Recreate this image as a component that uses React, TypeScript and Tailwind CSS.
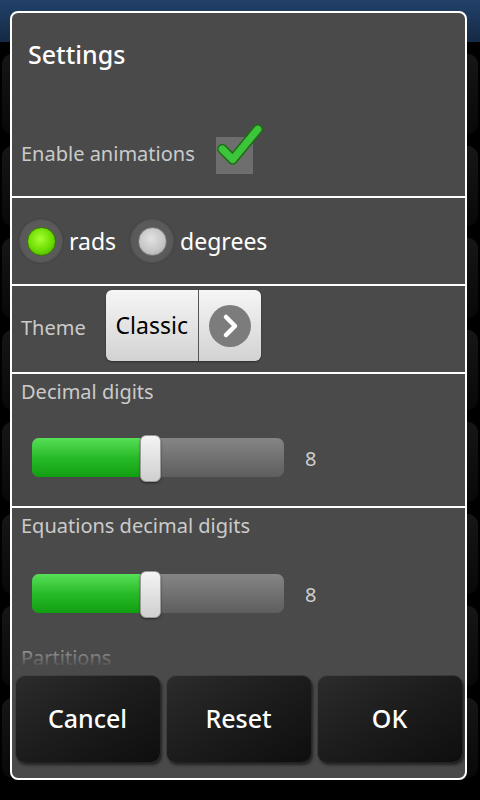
import React from "react";

const font = { fontFamily: '"Noto Sans", "Open Sans", sans-serif' };

const Separator = () => <div className="h-[2px] w-full bg-white" />;

const Radio = ({ checked, label }: { checked: boolean; label: string }) => {
  return (
    <div className="flex items-center">
      <div className="flex h-[46px] w-[46px] items-center justify-center rounded-full bg-[#5a5a5a] shadow-[inset_0_0_3px_rgba(0,0,0,0.6)]">
        {checked ? (
          <div className="h-[29px] w-[29px] rounded-full border border-[#3a7a00] bg-[radial-gradient(circle_at_45%_40%,#a6ff33_0%,#6bdc00_55%,#3f9a00_100%)]" />
        ) : (
          <div className="h-[29px] w-[29px] rounded-full border border-[#777] bg-[radial-gradient(circle_at_45%_40%,#e2e2e2_0%,#c4c4c4_60%,#9a9a9a_100%)]" />
        )}
      </div>
      <span className="ml-[5px] text-[23px] leading-none text-white">{label}</span>
    </div>
  );
};

const Slider = ({ value, percent }: { value: number; percent: number }) => {
  return (
    <div className="flex items-center pl-[11px]">
      <div className="relative h-[47px] w-[252px]">
        <div className="absolute left-0 right-0 top-[3px] h-[39px] overflow-hidden rounded-[7px] bg-gradient-to-b from-[#858585] to-[#5e5e5e]">
          <div
            className="h-full bg-gradient-to-b from-[#55e055] via-[#27bb27] to-[#109f10]"
            style={{ width: `${percent}%` }}
          />
        </div>
        <div
          className="absolute top-0 h-[47px] w-[21px] rounded-[6px] border border-[#9a9a9a] bg-gradient-to-b from-[#f4f4f4] to-[#cfcfcf] shadow-[0_1px_2px_rgba(0,0,0,0.5)]"
          style={{ left: `${percent}%` }}
        />
      </div>
      <span className="ml-[21px] text-[20px] text-[#cfcfcf]">{value}</span>
    </div>
  );
};

const DialogButton = ({ label }: { label: string }) => (
  <button className="flex h-[87px] w-[145px] items-center justify-center rounded-[9px] bg-gradient-to-br from-[#2c2c2c] via-[#1c1c1c] to-[#0e0e0e] text-[25px] font-medium text-white shadow-[inset_1px_1px_0_rgba(255,255,255,0.12),2px_3px_3px_rgba(0,0,0,0.55)]">
    {label}
  </button>
);

const App = () => {
  const bgKeys = Array.from({ length: 40 });

  return (
    <div className="relative h-[800px] w-[480px] overflow-hidden bg-black" style={font}>
      <div className="h-[42px] w-full bg-gradient-to-b from-[#22416a] to-[#142a45]" />
      <div className="grid grid-cols-5 gap-[12px] px-[2px] pt-[12px]">
        {bgKeys.map((_, i) => (
          <div key={i} className="h-[80px] rounded-[10px] bg-gradient-to-b from-[#161616] to-[#080808]" />
        ))}
      </div>

      <div className="absolute left-[10px] top-[11px] flex h-[769px] w-[457px] flex-col overflow-hidden rounded-[8px] border-2 border-white bg-[#4a4a4a]">
        <div className="relative h-[655px] overflow-hidden">
          <div className="flex h-[82px] items-center pl-[16px] pt-[2px]">
            <span className="text-[25px] font-medium text-white">Settings</span>
          </div>
          <div className="flex h-[101px] items-center pl-[9px] pt-[17px]">
            <span className="text-[20px] text-[#cbcbcb]">Enable animations</span>
            <div className="relative ml-[21px] mt-[2px] h-[37px] w-[37px] bg-[#6e6e6e]">
              <svg
                className="absolute -left-[2px] -top-[15px]"
                width="50"
                height="50"
                viewBox="0 0 48 48"
              >
                <path
                  d="M8 26 L18 36 L42 7"
                  fill="none"
                  stroke="#1f6d14"
                  strokeWidth="10"
                  strokeLinecap="round"
                  strokeLinejoin="round"
                />
                <path
                  d="M8 26 L18 36 L42 7"
                  fill="none"
                  stroke="#3cc43a"
                  strokeWidth="7"
                  strokeLinecap="round"
                  strokeLinejoin="round"
                />
              </svg>
            </div>
          </div>
          <Separator />
          <div className="flex h-[86px] items-center gap-[13px] pl-[6px]">
            <Radio checked label="rads" />
            <Radio checked={false} label="degrees" />
          </div>
          <Separator />
          <div className="flex h-[86px] items-start pl-[9px] pt-[4px]">
            <span className="mt-[23px] text-[20px] text-[#cbcbcb]">Theme</span>
            <div className="ml-[20px] flex h-[71px] w-[155px] overflow-hidden rounded-[6px] bg-gradient-to-b from-[#f6f6f6] to-[#d2d2d2] shadow-[0_1px_2px_rgba(0,0,0,0.4)]">
              <div className="flex w-[93px] items-center justify-center border-r border-[#555]">
                <span className="text-[23px] text-black">Classic</span>
              </div>
              <div className="flex flex-1 items-center justify-center">
                <svg width="44" height="44" viewBox="0 0 44 44">
                  <circle cx="22" cy="22" r="21" fill="#7c7c7c" />
                  <path
                    d="M18 13 L27 22 L18 31"
                    fill="none"
                    stroke="#ffffff"
                    strokeWidth="4.5"
                    strokeLinecap="round"
                    strokeLinejoin="round"
                  />
                </svg>
              </div>
            </div>
          </div>
          <Separator />
          <div className="flex h-[132px] flex-col pl-[9px] pt-[4px]">
            <span className="text-[20px] leading-[28px] text-[#cbcbcb]">Decimal digits</span>
            <div className="mt-[29px]">
              <Slider value={8} percent={43} />
            </div>
          </div>
          <Separator />
          <div className="flex h-[132px] flex-col pl-[9px] pt-[4px]">
            <span className="text-[20px] leading-[28px] text-[#cbcbcb]">Equations decimal digits</span>
            <div className="mt-[31px]">
              <Slider value={8} percent={43} />
            </div>
          </div>
          <div className="pl-[9px] pt-[4px]">
            <span className="text-[20px] leading-[28px] text-[#cbcbcb]">Partitions</span>
          </div>
          <div className="pointer-events-none absolute bottom-0 left-0 right-0 h-[30px] bg-gradient-to-b from-[#4a4a4a00] to-[#4a4a4a]" />
        </div>
        <div className="flex gap-[6px] pl-[3px] pt-[7px]">
          <DialogButton label="Cancel" />
          <DialogButton label="Reset" />
          <DialogButton label="OK" />
        </div>
      </div>
    </div>
  );
};

export default App;
